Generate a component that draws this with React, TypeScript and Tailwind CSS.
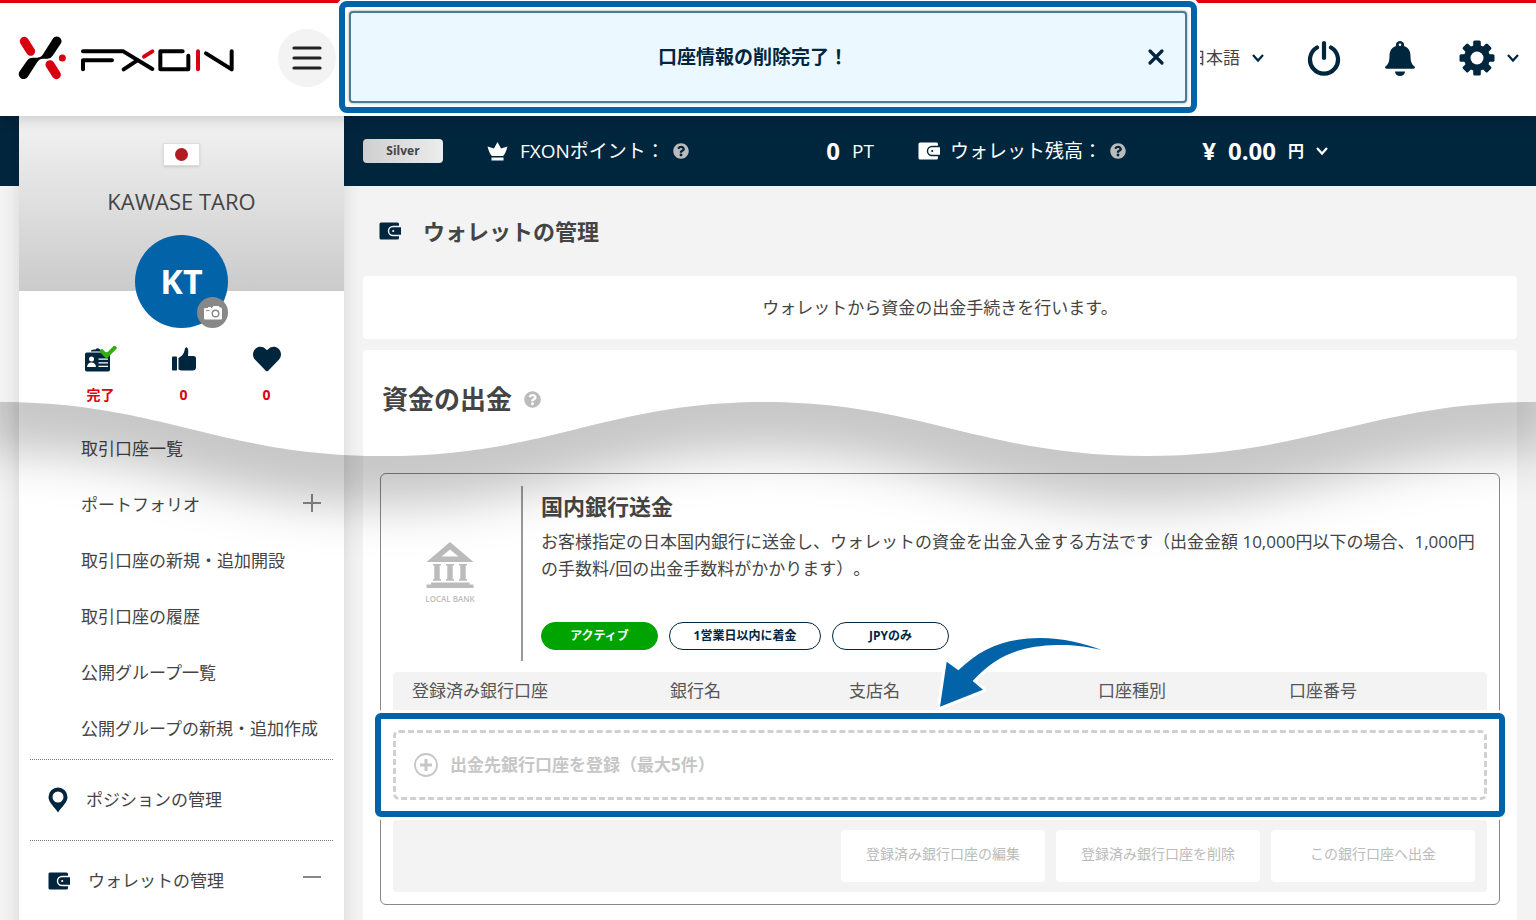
import React from "react";
import { FaHeart, FaQuestionCircle } from "react-icons/fa";

interface IconProps {
  className?: string;
}

function Logo() {
  return (
    <svg viewBox="54 108 651 132" className="h-11 w-[217px]" fill="none" role="img" aria-label="FXON">
      <path
        d="M158 117 129 163Q123 173 112 173H98Q87 173 81 182L59 214A14 14 0 0 0 83 231L112 186Q118 176 129 176H143Q152 176 158 167L183 130A14 14 0 0 0 158 117Z"
        fill="#000"
      />
      <g stroke="#d7000f" strokeLinecap="round">
        <path d="M73 124 92 154" strokeWidth="27" />
        <path d="M150 194 169 224" strokeWidth="27" />
        <path d="M432 170 457 154M594 154V208" strokeWidth="12" />
      </g>
      <circle cx="187" cy="174" r="10.500" fill="#d7000f" />
      <g stroke="#000" strokeWidth="12" strokeLinecap="round" strokeLinejoin="round">
        <polyline points="249,154 370,154 457,207" />
        <polyline points="249,208 249,181 336,181" />
        <line x1="371" y1="208" x2="412" y2="181" />
        <polyline points="548,154 481,154 481,208 565,208 565,167" />
        <polyline points="618,160 695,208 695,154" />
      </g>
    </svg>
  );
}

function Chevron({ className }: IconProps) {
  return (
    <svg viewBox="0 0 12 12" className={className} fill="none" stroke="currentColor" strokeWidth="2.200" aria-hidden>
      <path d="M1 3 6 8.500 11 3" />
    </svg>
  );
}

function PowerIcon({ className }: IconProps) {
  return (
    <svg viewBox="0 0 34 36" className={className} fill="none" stroke="currentColor" strokeWidth="4.200" strokeLinecap="round" aria-hidden>
      <path d="M17 3V18M10 7.500A14 14 0 1 0 24 7.500" />
    </svg>
  );
}

function BellIcon({ className }: IconProps) {
  return (
    <svg viewBox="0 0 30 36" className={className} aria-hidden>
      <path
        d="M15 1a4 4 0 0 1 4 5C23.500 7.500 25.500 11 25.500 16c0 5 1 8.500 4.200 10.500.6 1.300-.2 2.300-1.200 2.300H1.500c-1 0-1.800-1-1.200-2.300C3.500 24.500 4.500 21 4.500 16c0-5 2-8.500 6.500-10A4 4 0 0 1 15 1Z"
        fill="currentColor"
      />
      <circle cx="15" cy="4.800" r="1.300" fill="#fff" />
      <path d="M10 31.500h10a5 4.500 0 0 1-10 0Z" fill="currentColor" />
    </svg>
  );
}

function GearIcon({ className }: IconProps) {
  return (
    <svg viewBox="-18 -18 36 36" className={className} aria-hidden>
      <g fill="currentColor">
        {[0, 45, 90, 135].map((a) => (
          <rect key={a} x="-3.800" y="-17.500" width="7.600" height="35" rx="1.500" transform={`rotate(${a})`} />
        ))}
        <circle r="13" />
      </g>
      <circle r="6.500" fill="#fff" />
    </svg>
  );
}

function WalletIcon({ className }: IconProps) {
  return (
    <svg viewBox="0 0 22 18" className={className} aria-hidden>
      <path
        fill="currentColor"
        fillRule="evenodd"
        d="M2 0.500H18.500Q20 .5 20 2V3.800H14a5.200 5.200 0 0 0 0 10.400H20V16Q20 17.500 18.500 17.500H2Q.5 17.500 .5 16V2Q.5 .5 2 .5Z"
      />
      <path d="M14 5.200H22V12.800H14a3.800 3.800 0 0 1 0-7.600Zm.200 2.700a1.100 1.100 0 1 0 0 2.200 1.100 1.100 0 0 0 0-2.200Z" fill="currentColor" fillRule="evenodd" />
    </svg>
  );
}

function CrownIcon({ className }: IconProps) {
  return (
    <svg viewBox="0 0 20 19" className={className} fill="currentColor" aria-hidden>
      <path d="M10 0 13.500 6.500 20 4.500Q18 12 15.500 14H4.500Q2 12 0 4.500L6.500 6.500Z" />
      <path d="M4 15.500H16V18.500H4Z" />
    </svg>
  );
}

function CameraIcon({ className }: IconProps) {
  return (
    <svg viewBox="0 0 18 14" className={className} aria-hidden>
      <path d="M1.500 2H4V1H7V2H8L9.500 0H14.500L16 1.500H17Q18 1.500 18 3V12.500Q18 13.500 17 13.500H1Q0 13.500 0 12.500V3Q0 2 1.500 2Z" fill="#fff" />
      <circle cx="11.500" cy="7.500" r="3.300" fill="none" stroke="#888" strokeWidth="1.400" />
      <path d="M2 4.600H5.500" stroke="#888" strokeWidth="1" />
    </svg>
  );
}

function IdCardIcon({ className }: IconProps) {
  return (
    <svg viewBox="0 0 32 26" className={className} aria-hidden>
      <path d="M6 4.500Q8 3 10.500 3.500 12.500 1 15 3.500L19 5.500H6Z" fill="#00263e" />
      <rect y="6.500" width="25" height="19" rx="1.800" fill="#00263e" />
      <circle cx="6.500" cy="13" r="2.500" fill="#fff" />
      <path d="M2 21Q2.500 16.500 6.500 16.500T11 21Z" fill="#fff" />
      <path d="M13.500 13.200H23M13.500 16.800H23M13.500 20.400H23" stroke="#fff" strokeWidth="1.300" />
      <path d="M17 5.500 21.500 10 29.500 2" fill="none" stroke="#2fb00c" strokeWidth="4" strokeLinecap="square" />
    </svg>
  );
}

function ThumbIcon({ className }: IconProps) {
  return (
    <svg viewBox="0 0 24 24" className={className} fill="currentColor" aria-hidden>
      <rect y="9.500" width="5" height="14" rx=".8" />
      <path d="M6.500 11Q11.500 8.500 12.500 3.500 13 .2 14.500.3 17 .8 16 9H21.500Q24 9 24 11.500V20Q24 23.500 20.500 23.500H10Q8 23.500 6.500 22.500Z" />
    </svg>
  );
}

function PinIcon({ className }: IconProps) {
  return (
    <svg viewBox="0 0 20 26" className={className} aria-hidden>
      <path
        fill="currentColor"
        fillRule="evenodd"
        d="M10 .5A9.500 9.500 0 0 1 19.500 10C19.500 15.500 14 19.500 10 25.500 6 19.500 .5 15.500 .5 10A9.500 9.500 0 0 1 10 .5ZM10 4.500a5.500 5.500 0 1 0 0 11 5.500 5.500 0 0 0 0-11Z"
      />
    </svg>
  );
}

function BankIcon({ className }: IconProps) {
  return (
    <svg viewBox="0 0 48 47" className={className} fill="currentColor" aria-hidden>
      <path fillRule="evenodd" d="M24 0 47.500 20H.5ZM24 7.500 15.500 14.500H32.500Z" />
      {[7, 20, 33].map((x) => (
        <path key={x} d={`M${x} 22h8v1.500h-1.300V37H${x + 8}v1.700H${x}V37h1.300V23.500H${x}Z`} />
      ))}
      <path d="M5 40.500H43.500V42.500H47.500V46H.5V42.500H5Z" />
    </svg>
  );
}

const stats = [
  { icon: <IdCardIcon className="h-[26px] w-8" />, value: "完了" },
  { icon: <ThumbIcon className="size-6" />, value: "0" },
  { icon: <FaHeart className="size-7" />, value: "0" },
];

const accountLinks = [
  { label: "取引口座一覧" },
  { label: "ポートフォリオ", expandable: true },
  { label: "取引口座の新規・追加開設" },
  { label: "取引口座の履歴" },
  { label: "公開グループ一覧" },
  { label: "公開グループの新規・追加作成" },
];

function Header() {
  return (
    <header className="relative z-20 flex h-[116px] shrink-0 items-center bg-white pl-[18px] pr-[17px] text-[#00263e] shadow-[inset_0_3px_0_#e0000f,0_2px_14px_rgba(0,0,0,0.2)]">
      <a href="#" aria-label="FXON">
        <Logo />
      </a>
      <button type="button" aria-label="メニュー" className="ml-[43px] flex size-[58px] items-center justify-center rounded-full bg-[#f3f3f3]">
        <svg viewBox="0 0 30 26" className="h-[26px] w-[30px]" stroke="#222" strokeWidth="3.200" strokeLinecap="round" aria-hidden>
          <path d="M2 3H28M2 13H28M2 23H28" />
        </svg>
      </button>

      <nav className="ml-auto flex items-center">
        <button type="button" className="flex items-center gap-3 text-[17px] text-[#444]">
          日本語
          <Chevron className="size-3 text-[#00263e]" />
        </button>
        <button type="button" aria-label="ログアウト" className="ml-[43px]">
          <PowerIcon className="h-9 w-[34px]" />
        </button>
        <button type="button" aria-label="通知" className="ml-11">
          <BellIcon className="h-9 w-[30px]" />
        </button>
        <button type="button" aria-label="設定" className="ml-11 flex items-center gap-3">
          <GearIcon className="size-9" />
          <Chevron className="size-3" />
        </button>
      </nav>

      <div
        role="alert"
        className="absolute top-px left-1/2 h-28 w-[858px] -translate-x-1/2 rounded-lg border-6 border-[#0263a9] bg-white p-1 ring-3 ring-white"
      >
        <div className="relative flex h-full items-center justify-center rounded border-2 border-[#4f7a94] bg-[#ecf8ff] pr-[30px] text-[19px] font-bold shadow-[0_0_3px_rgba(0,0,0,0.4)]">
          口座情報の削除完了！
          <button type="button" aria-label="閉じる" className="absolute right-5">
            <svg viewBox="0 0 18 18" className="size-[18px]" stroke="currentColor" strokeWidth="3.200" strokeLinecap="round" aria-hidden>
              <path d="M3 3 15 15M15 3 3 15" />
            </svg>
          </button>
        </div>
      </div>
    </header>
  );
}

function Sidebar() {
  return (
    <aside className="relative z-10 w-[325px] shrink-0 bg-white shadow-[0_0_18px_rgba(0,0,0,0.12)]">
      <div className="flex h-[175px] flex-col items-center bg-linear-to-b from-[#f3f3f3] to-[#cbcbcb] pt-[27px]">
        <div className="flex h-[23px] w-[37px] shrink-0 items-center justify-center border border-[#ddd] bg-white shadow-sm">
          <span className="size-[13px] rounded-full bg-[#b01c22]" />
        </div>
        <p className="mt-5 text-[22px] leading-[30px] text-[#444]">KAWASE TARO</p>
        <div className="relative mt-[19px] flex size-[93px] shrink-0 items-center justify-center rounded-full bg-[#0263a9] text-[34px] font-bold text-white">
          KT
          <button type="button" aria-label="写真を変更" className="absolute right-0 bottom-0 flex size-[31px] items-center justify-center rounded-full bg-[#888]">
            <CameraIcon className="h-3.5 w-[18px]" />
          </button>
        </div>
      </div>

      <ul className="mr-9 ml-10 mt-[54px] grid grid-cols-3 text-[#00263e]">
        {stats.map((s, i) => (
          <li key={i} className="flex flex-col items-center">
            <span className="flex h-7 items-center">{s.icon}</span>
            <span className="mt-3 text-sm leading-5 font-bold text-[#e0000f]">{s.value}</span>
          </li>
        ))}
      </ul>

      <nav className="mt-4 text-[17px] text-[#444]">
        <ul>
          {accountLinks.map((l) => (
            <li key={l.label} className="flex h-14 items-center pl-[62px] pr-[23px]">
              <a href="#" className="whitespace-nowrap">
                {l.label}
              </a>
              {l.expandable && (
                <svg viewBox="0 0 18 18" className="mb-1 ml-auto size-[18px]" stroke="#888" strokeWidth="2" aria-hidden>
                  <path d="M0 9H18M9 0V18" />
                </svg>
              )}
            </li>
          ))}
        </ul>
        <a href="#" className="mx-[11px] mt-0.5 flex h-[81px] items-center border-t border-dotted border-[#777] pl-[18px]">
          <PinIcon className="mr-[18px] h-[26px] w-5 text-[#00263e]" />
          ポジションの管理
        </a>
        <a href="#" className="mx-[11px] flex h-[81px] items-center border-t border-dotted border-[#777] pl-[18px] pr-3">
          <WalletIcon className="mr-[18px] h-[18px] w-[22px] text-[#00263e]" />
          ウォレットの管理
          <svg viewBox="0 0 18 18" className="ml-auto size-[18px]" stroke="#888" strokeWidth="2" aria-hidden>
            <path d="M0 5H18" />
          </svg>
        </a>
      </nav>
    </aside>
  );
}

function InfoBar() {
  return (
    <div className="flex h-[70px] items-center gap-11 pl-[19px] text-[19px] whitespace-nowrap text-white">
      <span className="flex h-6 w-20 shrink-0 items-center justify-center rounded bg-linear-to-r from-[#cfcfcf] to-[#ececec] text-xs font-bold text-[#444]">
        Silver
      </span>
      <div className="flex w-[387px] items-center">
        <CrownIcon className="mr-3 h-[19px] w-[21px]" />
        FXONポイント：
        <FaQuestionCircle className="ml-2 size-4 text-[#bbb]" />
        <b className="mr-3 ml-auto text-2xl">0</b>
        PT
      </div>
      <div className="flex w-[410px] items-center">
        <WalletIcon className="mr-2.5 h-[18px] w-[22px]" />
        ウォレット残高：
        <FaQuestionCircle className="ml-2 size-4 text-[#bbb]" />
        <b className="mr-3 ml-auto text-2xl">¥</b>
        <b className="mr-3 text-2xl">0.00</b>
        <b className="mr-3 text-base">円</b>
        <Chevron className="size-3" />
      </div>
    </div>
  );
}

function BankTable() {
  return (
    <div className="relative mt-[11px]">
      <table className="w-full table-fixed text-left text-[17px] text-[#555]">
        <thead>
          <tr className="h-[38px] bg-[#f3f3f3]">
            <th className="w-[258px] rounded-tl pl-[19px] font-normal">登録済み銀行口座</th>
            <th className="w-[179px] pl-[19px] font-normal">銀行名</th>
            <th className="w-[249px] pl-[19px] font-normal">支店名</th>
            <th className="w-[191px] pl-[19px] font-normal">口座種別</th>
            <th className="rounded-tr pl-[19px] font-normal">口座番号</th>
          </tr>
        </thead>
        <tbody>
          <tr>
            <td colSpan={5} className="py-5">
              <div className="relative">
                <button
                  type="button"
                  className="flex h-[70px] w-full items-center gap-3 rounded-md border-3 border-dashed border-[#d0d0d0] pl-[18px] font-bold text-[#c6c6c6]"
                >
                  <svg viewBox="0 0 24 24" className="size-6" fill="none" stroke="currentColor" aria-hidden>
                    <circle cx="12" cy="12" r="11" strokeWidth="1.800" />
                    <path d="M6 12H18M12 6V18" strokeWidth="3" />
                  </svg>
                  出金先銀行口座を登録（最大5件）
                </button>
                <div className="pointer-events-none absolute -inset-x-[18px] -inset-y-[17px] rounded-md border-6 border-[#0263a9] ring-3 ring-white" />
              </div>
            </td>
          </tr>
        </tbody>
      </table>

      <div className="flex justify-end gap-[11px] rounded bg-[#f3f3f3] px-3 py-2.5 text-sm text-[#bbb]">
        {["登録済み銀行口座の編集", "登録済み銀行口座を削除", "この銀行口座へ出金"].map((label) => (
          <button key={label} type="button" disabled className="h-[52px] w-[204px] rounded bg-white pb-1">
            {label}
          </button>
        ))}
      </div>

      <svg viewBox="402 96 516 240" className="pointer-events-none absolute -top-10 left-[541px] h-20 w-[172px]" aria-hidden>
        <path
          d="M420 320 440 185 475 211C545 142 620 115 720 114 790 114 850 130 905 150 850 138 820 134 770 135 660 138 590 165 518 243L549 269Z"
          fill="#0263a9"
          stroke="#fff"
          strokeWidth="18"
          strokeLinejoin="round"
          paintOrder="stroke"
        />
      </svg>
    </div>
  );
}

function Content() {
  return (
    <main className="min-w-0 flex-1">
      <InfoBar />
      <div className="px-[19px]">
        <h1 className="flex h-[90px] items-center gap-[21px] pl-[15px] text-[22px] font-bold text-[#444]">
          <WalletIcon className="h-[18px] w-6 text-[#00263e]" />
          ウォレットの管理
        </h1>
        <p className="flex h-[63px] items-center justify-center rounded bg-white text-[17px] text-[#444]">
          ウォレットから資金の出金手続きを行います。
        </p>

        <section className="mt-[11px] rounded bg-white px-[17px] pt-[29px] pb-10">
          <h2 className="flex h-10 items-center gap-3 pl-0.5 text-[26px] font-bold text-[#444]">
            資金の出金
            <FaQuestionCircle className="size-[17px] text-[#bbb]" />
          </h2>

          <div className="mt-[54px] rounded-md border border-[#888] p-3">
            <div className="flex">
              <div className="flex w-[130px] shrink-0 flex-col items-center justify-center border-r-2 border-[#999] pr-3.5 text-[#bbb]">
                <BankIcon className="h-[47px] w-12" />
                <span className="mt-1 text-[8px] leading-3 font-semibold">LOCAL BANK</span>
              </div>
              <div className="h-[175px] pr-2 pl-[18px]">
                <h3 className="mt-0.5 text-[22px] leading-9 font-bold text-[#444]">国内銀行送金</h3>
                <p className="mt-1 text-[17px] leading-[27px] text-[#444]">
                  お客様指定の日本国内銀行に送金し、ウォレットの資金を出金入金する方法です（出金金額
                  10,000円以下の場合、1,000円の手数料/回の出金手数料がかかります）。
                </p>
                <ul className="mt-10 flex gap-[11px] text-center text-xs leading-[26px] font-bold text-[#00263e]">
                  <li className="w-[117px] rounded-full border border-[#00a400] bg-[#00a400] text-white">アクティブ</li>
                  <li className="w-[152px] rounded-full border border-[#00263e] bg-white">1営業日以内に着金</li>
                  <li className="w-[117px] rounded-full border border-[#00263e] bg-white">JPYのみ</li>
                </ul>
              </div>
            </div>
            <BankTable />
          </div>
        </section>
      </div>
    </main>
  );
}

/** Soft shadow under the wavy page cut. */
function WaveShade() {
  return (
    <svg
      viewBox="0 0 1536 200"
      preserveAspectRatio="none"
      className="pointer-events-none absolute inset-x-0 top-[402px] z-10 h-[200px] w-full"
      aria-hidden
    >
      <defs>
        <clipPath id="wave-cut">
          <path d="M0 0C160 0 220 54 384 54S608 0 764 0 984 54 1146 54 1376 0 1536 0V200H0Z" />
        </clipPath>
        <filter id="wave-blur" x="-10%" y="-60%" width="120%" height="220%">
          <feGaussianBlur stdDeviation="24" />
        </filter>
      </defs>
      <g clipPath="url(#wave-cut)">
        <path
          d="M-20 -100V50H0C160 50 220 104 384 104S608 50 764 50 984 104 1146 104 1376 50 1536 50H1556V-100Z"
          fillOpacity="0.22"
          filter="url(#wave-blur)"
        />
      </g>
    </svg>
  );
}

export default function App() {
  return (
    <div className="relative flex h-screen flex-col overflow-hidden bg-[#f3f3f3] font-['Open_Sans','Noto_Sans_CJK_JP',sans-serif] [text-spacing-trim:space-all]">
      <Header />
      <div className="flex flex-1 bg-[linear-gradient(#00263e_70px,#f3f3f3_70px)] pl-[19px]">
        <Sidebar />
        <Content />
      </div>
      <WaveShade />
    </div>
  );
}
